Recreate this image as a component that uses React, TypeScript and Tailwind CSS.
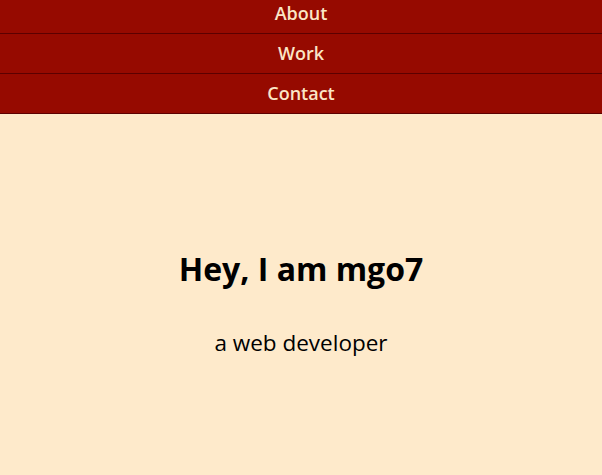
export default function App() {
  const items = ["About", "Work", "Contact"];
  return (
    <div className="h-[475px] overflow-hidden bg-[#feeacb] font-['Open_Sans',sans-serif]">
      <nav className="-mt-[6px] flex flex-col">
        {items.map((t) => (
          <a
            key={t}
            className="flex h-[40px] items-center justify-center border-b border-[#5c0000] bg-[#960a00] text-[18px] font-semibold text-[#fbe6c6]"
          >
            {t}
          </a>
        ))}
      </nav>
      <main className="flex flex-col items-center pt-[135px]">
        <h1 className="text-[32px] font-bold leading-[40px] text-black">Hey, I am mgo7</h1>
        <p className="mt-[39px] text-[22.5px] leading-[30px] text-black">a web developer</p>
      </main>
    </div>
  );
}
